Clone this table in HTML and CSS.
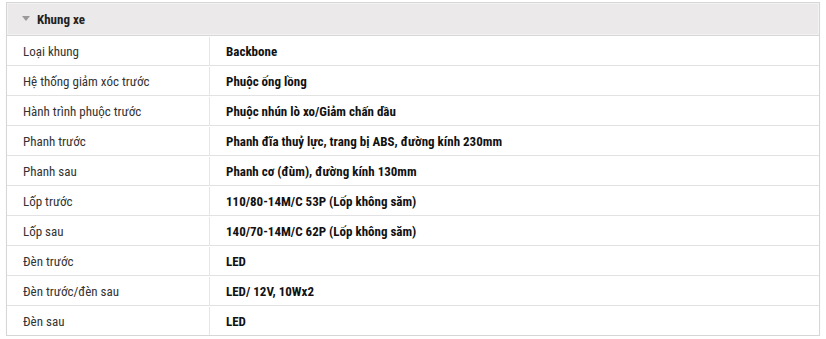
FILE: index.html
```html
<!DOCTYPE html>
<html><head><meta charset="utf-8"><link rel="stylesheet" href="styles.css"></head>
<body>
<div class="spec">
  <div class="spec-head"><span class="caret"></span>Khung xe</div>
  <div class="row"><div class="label">Loại khung</div><div class="value">Backbone</div></div>
  <div class="row"><div class="label">Hệ thống giảm xóc trước</div><div class="value">Phuộc ống lồng</div></div>
  <div class="row"><div class="label">Hành trình phuộc trước</div><div class="value">Phuộc nhún lò xo/Giảm chấn dầu</div></div>
  <div class="row"><div class="label">Phanh trước</div><div class="value">Phanh đĩa thuỷ lực, trang bị ABS, đường kính 230mm</div></div>
  <div class="row"><div class="label">Phanh sau</div><div class="value">Phanh cơ (đùm), đường kính 130mm</div></div>
  <div class="row"><div class="label">Lốp trước</div><div class="value">110/80-14M/C 53P (Lốp không săm)</div></div>
  <div class="row"><div class="label">Lốp sau</div><div class="value">140/70-14M/C 62P (Lốp không săm)</div></div>
  <div class="row"><div class="label">Đèn trước</div><div class="value">LED</div></div>
  <div class="row"><div class="label">Đèn trước/đèn sau</div><div class="value">LED/ 12V, 10Wx2</div></div>
  <div class="row"><div class="label">Đèn sau</div><div class="value">LED</div></div>
</div>
</body></html>
```
FILE: styles.css
```css
html,body{margin:0;background:#fff}
body{padding:2px 0 0 6px;font-family:"Roboto Condensed",Roboto,sans-serif;font-stretch:condensed;font-size:13px}
.spec{width:812px;border:1px solid #d6d6d6;box-shadow:0 1px 1px rgba(0,0,0,.06)}
.spec-head{height:33px;box-sizing:border-box;background:#ebe9e9;border-bottom:1px solid #d8d6d6;display:flex;align-items:center;padding-left:15px;font-weight:bold;color:#222;box-shadow:inset 0 0 0 1px #f3f2f2}
.caret{width:0;height:0;border-left:4px solid transparent;border-right:4px solid transparent;border-top:5px solid #9a9a9a;margin-right:7px;margin-top:-2px}
.row{display:flex;height:30px;box-sizing:border-box;border-bottom:1px solid #e2e2e2;padding-top:1px}
.row:last-child{border-bottom:none;height:29px}
.label{width:203px;box-sizing:border-box;padding-left:16px;border-right:1px solid #e6e6e6;display:flex;align-items:center;color:#333}
.value{flex:1;padding-left:16px;display:flex;align-items:center;font-weight:bold;color:#111}
```
